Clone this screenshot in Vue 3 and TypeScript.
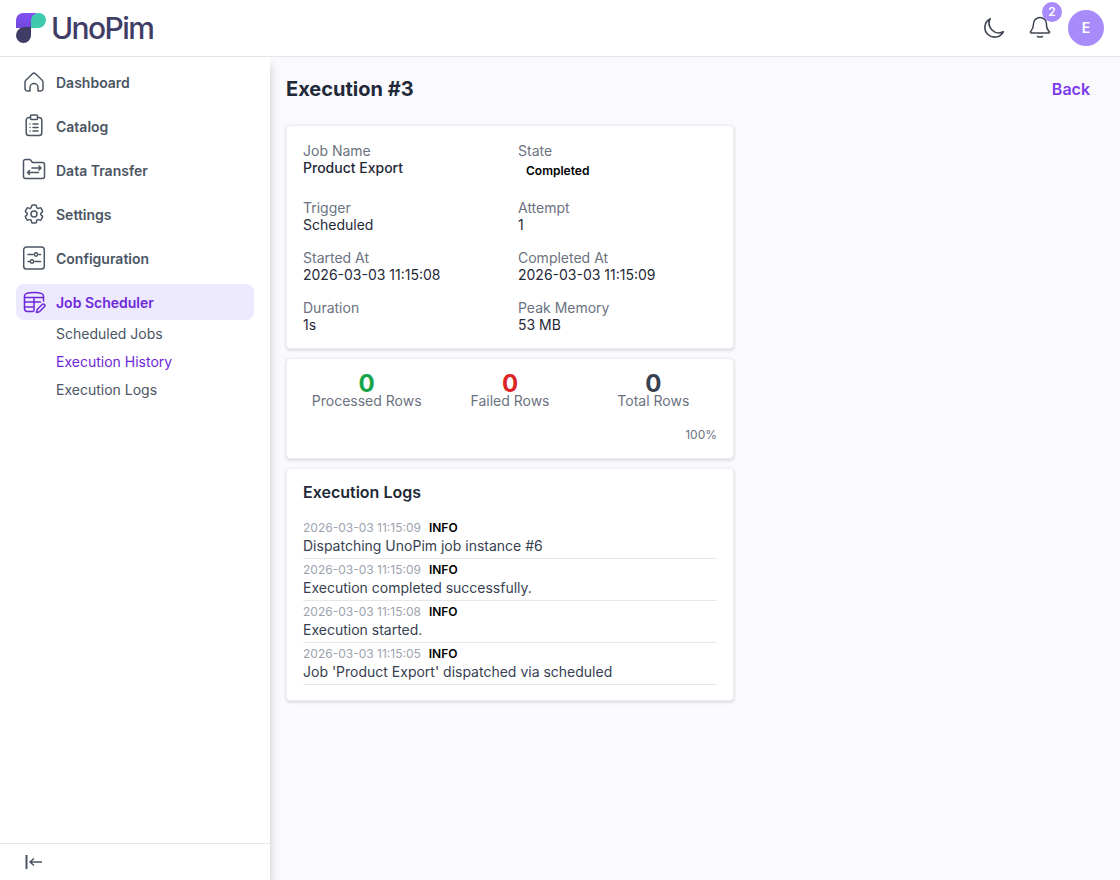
<template>
  <div class="page">
    <header class="topbar">
      <div class="logo">
        <svg class="logo-mark" width="30" height="30" viewBox="0 0 30 30">
          <defs>
            <linearGradient id="stem" x1="0" y1="0" x2="0" y2="1">
              <stop offset="0" stop-color="#8250f2" />
              <stop offset="1" stop-color="#6f48dc" />
            </linearGradient>
          </defs>
          <path d="M0 7a7 7 0 0 1 7-7h16a7 7 0 0 0-7 7v8H0z" fill="url(#stem)" />
          <path d="M15 8a8 8 0 0 1 8-8h0a7 7 0 0 1 7 7v0a8 8 0 0 1-8 8h-7z" fill="#3fc9ad" />
          <path d="M0 22.500a7.500 7.500 0 0 0 15 0V14H8.500A8.500 8.500 0 0 0 0 22.500z" fill="#3f3d66" />
        </svg>
        <span class="logo-text">UnoPim</span>
      </div>
      <div class="top-actions">
        <svg class="moon" viewBox="0 0 24 24" fill="none" stroke="#3f4654" stroke-width="1.500" stroke-linecap="round" stroke-linejoin="round">
          <path d="M20.600 15.500A9 9 0 0 1 8.500 3.400a9 9 0 1 0 12.100 12.100z" />
        </svg>
        <div class="bell">
          <svg class="top-icon" viewBox="0 0 24 24" fill="none" stroke="#3f4654" stroke-width="1.500" stroke-linecap="round" stroke-linejoin="round">
            <path d="M12 1.500a6.500 6.500 0 0 0-6.500 6.500c0 3.500-.6 5-2.800 7.600-.5.600-.2 1.400.6 1.400h17.400c.8 0 1.100-.8.600-1.400C18.100 13 18.500 11.500 18.500 8A6.500 6.500 0 0 0 12 1.500z" />
            <path d="M9.500 20.500c1.500.7 3.500.7 5 0" />
          </svg>
          <span class="bell-count">2</span>
        </div>
        <div class="avatar">E</div>
      </div>
    </header>

    <div class="body">
      <aside class="sidebar">
        <nav class="nav">
          <div v-for="item in navItems" :key="item.label" class="nav-item" :class="{ active: item.active }">
            <svg class="nav-icon" viewBox="0 0 24 24" fill="none" stroke="currentColor" stroke-width="1.500" stroke-linecap="round" stroke-linejoin="round">
              <path v-for="d in item.paths" :key="d" :d="d" />
            </svg>
            <span>{{ item.label }}</span>
          </div>
          <div class="sub-nav">
            <div v-for="sub in subItems" :key="sub" class="sub-item" :class="{ current: sub === 'Execution History' }">{{ sub }}</div>
          </div>
        </nav>
        <div class="collapse">
          <svg width="18" height="14" viewBox="0 0 18 14" fill="none" stroke="#4b5563" stroke-width="1.500">
            <path d="M1.500 0v14" stroke-width="2" />
            <path d="M17 7H5M9 3.500 5 7l4 3.500" />
          </svg>
        </div>
      </aside>

      <main class="main">
        <div class="title-row">
          <h1>Execution #3</h1>
          <a class="back">Back</a>
        </div>

        <div class="cards">
          <section class="card">
            <div class="info-grid">
              <div v-for="field in fields" :key="field.label">
                <div class="field-label">{{ field.label }}</div>
                <div v-if="field.badge" class="badge">{{ field.value }}</div>
                <div v-else class="field-value" :class="{ strong: field.strong }">{{ field.value }}</div>
              </div>
            </div>
          </section>

          <section class="card stats-card">
            <div class="stats">
              <div v-for="stat in stats" :key="stat.label" class="stat">
                <div class="stat-num" :style="{ color: stat.color }">{{ stat.value }}</div>
                <div class="stat-label">{{ stat.label }}</div>
              </div>
            </div>
            <div class="percent">100%</div>
          </section>

          <section class="card">
            <h2>Execution Logs</h2>
            <div class="logs">
              <div v-for="log in logs" :key="log.message" class="log-row">
                <div class="log-meta">
                  <span class="log-time">{{ log.time }}</span>
                  <span class="log-level">INFO</span>
                </div>
                <div class="log-msg">{{ log.message }}</div>
              </div>
            </div>
          </section>
        </div>
      </main>
    </div>
  </div>
</template>

<script setup lang="ts">
interface NavItem {
  label: string
  paths: string[]
  active?: boolean
}

const navItems: NavItem[] = [
  {
    label: 'Dashboard',
    paths: ['M3.800 10.300 10.500 3.800a2.200 2.200 0 0 1 3 0l6.700 6.500c.6.600.8 1.200.8 2V18.500a2.500 2.500 0 0 1-2.500 2.500H16v-3.500a4 4 0 0 0-8 0V21H5.500A2.500 2.500 0 0 1 3 18.500v-6.200c0-.8.200-1.400.8-2z']
  },
  {
    label: 'Catalog',
    paths: [
      'M8.500 3.500H7A2.800 2.800 0 0 0 4.200 6.300v12.400A2.800 2.800 0 0 0 7 21.500h10a2.800 2.800 0 0 0 2.800-2.800V6.300A2.800 2.800 0 0 0 17 3.500h-1.500',
      'M9.500 1h5a1 1 0 0 1 1 1v2.500a1 1 0 0 1-1 1h-5a1 1 0 0 1-1-1V2a1 1 0 0 1 1-1z',
      'M8 10h.01M11 10h5M8 13.500h.01M11 13.500h5M8 17h.01M11 17h5'
    ]
  },
  {
    label: 'Data Transfer',
    paths: [
      'M1.500 18.500V3.500a2 2 0 0 1 2-2h4.500l2.500 3h10a2 2 0 0 1 2 2v12a2 2 0 0 1-2 2h-17a2 2 0 0 1-2-2z',
      'M5.500 14.500h11M7.500 12.500l-2 2 2 2M10 10h9M17 8l2 2-2 2'
    ]
  },
  {
    label: 'Settings',
    paths: [
      'M9.594 3.940c.09-.542.56-.94 1.110-.94h2.593c.55 0 1.020.398 1.110.94l.213 1.281c.063.374.313.686.645.870.074.04.147.083.22.127.325.196.72.257 1.075.124l1.217-.456a1.125 1.125 0 0 1 1.370.49l1.296 2.247a1.125 1.125 0 0 1-.26 1.431l-1.003.827c-.293.241-.438.613-.43.992a7.723 7.723 0 0 1 0 .255c-.008.378.137.75.43.991l1.004.827c.424.35.534.955.26 1.430l-1.298 2.247a1.125 1.125 0 0 1-1.369.491l-1.217-.456c-.355-.133-.75-.072-1.076.124a6.470 6.470 0 0 1-.22.128c-.331.183-.581.495-.644.869l-.213 1.281c-.09.543-.56.94-1.110.94h-2.594c-.55 0-1.019-.398-1.110-.94l-.213-1.281c-.062-.374-.312-.686-.644-.87a6.520 6.520 0 0 1-.22-.127c-.325-.196-.72-.257-1.076-.124l-1.217.456a1.125 1.125 0 0 1-1.369-.49l-1.297-2.247a1.125 1.125 0 0 1 .26-1.431l1.004-.827c.292-.24.437-.613.43-.991a6.932 6.932 0 0 1 0-.255c.007-.38-.138-.751-.43-.992l-1.004-.827a1.125 1.125 0 0 1-.26-1.430l1.297-2.247a1.125 1.125 0 0 1 1.370-.491l1.216.456c.356.133.751.072 1.076-.124.072-.044.146-.086.22-.128.332-.183.582-.495.644-.869l.214-1.280z',
      'M15 12a3 3 0 1 1-6 0 3 3 0 0 1 6 0z'
    ]
  },
  {
    label: 'Configuration',
    paths: [
      'M4.500 1h15A2.800 2.800 0 0 1 22.300 3.800v16.400a2.800 2.800 0 0 1-2.800 2.800h-15a2.800 2.800 0 0 1-2.800-2.800V3.800A2.800 2.800 0 0 1 4.500 1z',
      'M6 8.500h5M17 8.500h1.500M6 15.500h1.500M13 15.500h5.500',
      'M14 6.800a1.700 1.700 0 1 0 0 3.400 1.700 1.700 0 0 0 0-3.400zM10 13.800a1.700 1.700 0 1 0 0 3.400 1.700 1.700 0 0 0 0-3.400z'
    ]
  },
  {
    label: 'Job Scheduler',
    active: true,
    paths: [
      'M11 21.500H5.500a3 3 0 0 1-3-3V6c0-2.300 3.500-3.500 9.500-3.500S21.500 3.700 21.500 6v5',
      'M2.500 7.500h19M2.500 12h16M2.500 17h9M12 7.500V21',
      'M14.500 22.500l.7-3 5-5a1.500 1.500 0 0 1 2.200 2.200l-5 5z'
    ]
  }
]

const subItems = ['Scheduled Jobs', 'Execution History', 'Execution Logs']

const fields = [
  { label: 'Job Name', value: 'Product Export', strong: true },
  { label: 'State', value: 'Completed', badge: true },
  { label: 'Trigger', value: 'Scheduled' },
  { label: 'Attempt', value: '1' },
  { label: 'Started At', value: '2026-03-03 11:15:08' },
  { label: 'Completed At', value: '2026-03-03 11:15:09' },
  { label: 'Duration', value: '1s' },
  { label: 'Peak Memory', value: '53 MB' }
]

const stats = [
  { label: 'Processed Rows', value: 0, color: '#16a34a' },
  { label: 'Failed Rows', value: 0, color: '#dc2626' },
  { label: 'Total Rows', value: 0, color: '#374151' }
]

const logs = [
  { time: '2026-03-03 11:15:09', message: 'Dispatching UnoPim job instance #6' },
  { time: '2026-03-03 11:15:09', message: 'Execution completed successfully.' },
  { time: '2026-03-03 11:15:08', message: 'Execution started.' },
  { time: '2026-03-03 11:15:05', message: "Job 'Product Export' dispatched via scheduled" }
]
</script>

<style>
html,
body {
  margin: 0;
  background: #faf9fe;
}
</style>

<style scoped>
.page {
  width: 1120px;
  height: 880px;
  display: flex;
  flex-direction: column;
  overflow: hidden;
  font-family: Inter, "Liberation Sans", sans-serif;
  color: #1f2937;
}

.topbar {
  height: 56px;
  flex-shrink: 0;
  display: flex;
  align-items: center;
  justify-content: space-between;
  padding: 0 16px;
  background: #fff;
  border-bottom: 1px solid #e5e7eb;
}

.logo {
  display: flex;
  align-items: center;
  gap: 5px;
}

.logo-text {
  font-family: Inter, sans-serif;
  font-size: 30px;
  font-weight: 500;
  line-height: 1;
  letter-spacing: -1.6px;
  color: #3f3d66;
}

.top-actions {
  display: flex;
  align-items: center;
  gap: 16px;
}

.moon {
  width: 26px;
  height: 26px;
  display: block;
  margin-right: 5px;
}

.top-icon {
  width: 24px;
  height: 24px;
  display: block;
}

.bell {
  position: relative;
}

.bell-count {
  position: absolute;
  top: -14px;
  right: -10px;
  width: 20px;
  height: 20px;
  border-radius: 50%;
  background: #a78bfa;
  color: #fff;
  font-size: 12px;
  font-weight: 600;
  line-height: 20px;
  text-align: center;
}

.avatar {
  width: 36px;
  height: 36px;
  border-radius: 50%;
  background: #a78bfa;
  color: #fff;
  font-size: 14px;
  font-weight: 600;
  line-height: 36px;
  text-align: center;
}

.body {
  flex: 1;
  display: flex;
  min-height: 0;
}

.sidebar {
  width: 270px;
  flex-shrink: 0;
  display: flex;
  flex-direction: column;
  justify-content: space-between;
  background: #fff;
  box-shadow: 0 8px 10px rgba(0, 0, 0, 0.2);
}

.nav {
  padding: 7px 16px 0;
  display: flex;
  flex-direction: column;
  gap: 8px;
}

.nav-item {
  height: 36px;
  display: flex;
  align-items: center;
  gap: 8px;
  padding: 0 8px 0 6px;
  border-radius: 8px;
  font-size: 14px;
  font-weight: 600;
  color: #4b5563;
}

.nav-item.active {
  background: #ede9fe;
  color: #6d28d9;
}

.nav-icon {
  width: 24px;
  height: 24px;
  flex-shrink: 0;
  margin-right: 2px;
}

.sub-nav {
  display: flex;
  flex-direction: column;
  margin-top: -8px;
}

.sub-item {
  height: 28px;
  line-height: 28px;
  padding-left: 40px;
  font-size: 14px;
  color: #4b5563;
}

.sub-item.current {
  color: #6d28d9;
}

.collapse {
  height: 36px;
  display: flex;
  align-items: center;
  padding-left: 25px;
  border-top: 1px solid #e5e7eb;
}

.main {
  flex: 1;
  padding: 16px 30px 0 16px;
  min-width: 0;
}

.title-row {
  display: flex;
  align-items: center;
  justify-content: space-between;
  height: 32px;
}

h1 {
  margin: 0;
  font-size: 20px;
  font-weight: 700;
  color: #1f2937;
}

.back {
  font-size: 16px;
  font-weight: 600;
  color: #7c3aed;
}

.cards {
  width: 448px;
  margin-top: 20px;
  display: flex;
  flex-direction: column;
  gap: 9px;
}

.card {
  background: #fff;
  border: 1px solid #edeef2;
  border-radius: 4px;
  padding: 16px 16px 15px;
  box-shadow: 0 1px 3px rgba(0, 0, 0, 0.12), 0 2px 4px rgba(0, 0, 0, 0.04);
}

.stats-card {
  padding-bottom: 16px;
}

.info-grid {
  display: grid;
  grid-template-columns: 1fr 1fr;
  gap: 16px;
}

.field-label {
  font-size: 14px;
  color: #6b7280;
}

.field-value {
  font-size: 14px;
  color: #1f2937;
}

.field-value.strong {
  font-weight: 500;
}

.badge {
  height: 24px;
  line-height: 24px;
  padding: 0 8px;
  font-size: 12px;
  font-weight: 600;
  color: #000;
}

.stats {
  display: grid;
  grid-template-columns: repeat(3, 1fr);
  gap: 16px;
  text-align: center;
}

.stat-num {
  font-size: 24px;
  font-weight: 700;
  line-height: 17px;
}

.stat-label {
  font-size: 14px;
  line-height: 17px;
  color: #6b7280;
}

.percent {
  margin-top: 18px;
  text-align: right;
  font-size: 12px;
  color: #6b7280;
}

h2 {
  margin: -1px 0 16px;
  font-size: 16px;
  line-height: 17px;
  font-weight: 600;
  color: #1f2937;
}

.log-row {
  border-bottom: 1px solid #e5e7eb;
  padding: 3px 0 2px;
}

.log-meta {
  display: flex;
  align-items: center;
  gap: 8px;
  font-size: 12px;
  line-height: 16px;
}

.log-time {
  color: #9ca3af;
}

.log-level {
  font-weight: 600;
  color: #000;
}

.log-msg {
  font-size: 14px;
  line-height: 20px;
  color: #374151;
}
</style>
